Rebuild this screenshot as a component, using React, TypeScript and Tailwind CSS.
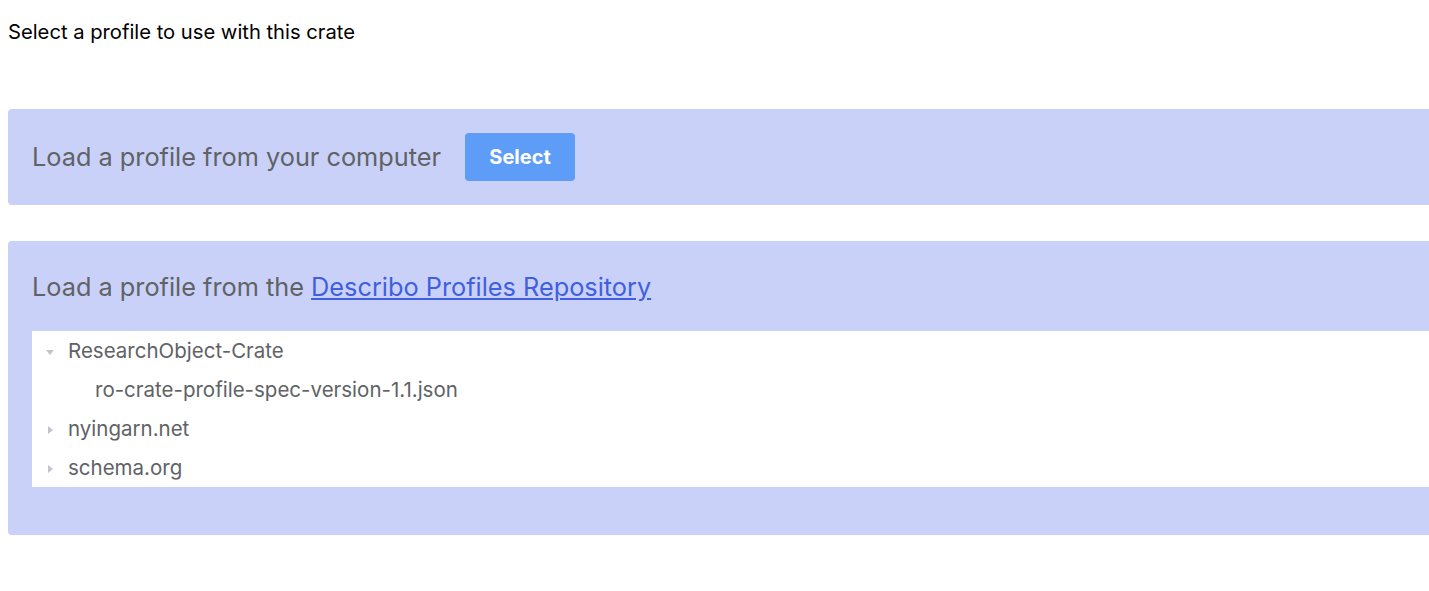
import { useState } from 'react';

type Node = { name: string; children?: Node[] };

const tree: Node[] = [
  { name: 'ResearchObject-Crate', children: [{ name: 'ro-crate-profile-spec-version-1.1.json' }] },
  { name: 'nyingarn.net', children: [] },
  { name: 'schema.org', children: [] },
];

function Caret({ open }: { open: boolean }) {
  return (
    <svg width="10" height="10" viewBox="0 0 10 10" className={open ? '' : '-rotate-90'}>
      <path d="M1 3h8L5 8z" fill="#c0c4cc" />
    </svg>
  );
}

export default function App() {
  const [open, setOpen] = useState<Record<string, boolean>>({ 'ResearchObject-Crate': true });

  return (
    <div className="w-[1429px] h-[591px] overflow-hidden bg-white font-['Inter',sans-serif]">
      <div className="w-[1500px] px-2">
        <h1 className="pt-[21px] text-[20.2px] leading-[22px] text-black">Select a profile to use with this crate</h1>

        <div className="mt-[66px] h-[96px] rounded bg-[#cad1f8] pl-6 flex items-center gap-6">
          <span className="text-[25.3px] text-[#606266]">Load a profile from your computer</span>
          <button className="w-[110px] h-[48px] rounded bg-[#5d9cf7] text-white text-[20px] font-bold">Select</button>
        </div>

        <div className="mt-9 rounded bg-[#cad1f8] pl-6 pt-[30px] pb-[47px]">
          <div className="text-[25.3px] leading-[32px] text-[#606266]">
            Load a profile from the{' '}
            <a href="#" className="text-[#3f5fe0] underline">Describo Profiles Repository</a>
          </div>
          <div className="mt-[28px] bg-white">
            {tree.map((n) => (
              <div key={n.name}>
                <div
                  className="h-[39px] pt-[2px] flex items-center pl-[13px] gap-[13px] text-[20.5px] text-[#606266] cursor-pointer"
                  onClick={() => setOpen({ ...open, [n.name]: !open[n.name] })}
                >
                  <Caret open={!!open[n.name]} />
                  <span>{n.name}</span>
                </div>
                {open[n.name] &&
                  n.children?.map((c) => (
                    <div key={c.name} className="h-[39px] pt-[2px] flex items-center pl-[63px] text-[20.5px] text-[#606266]">
                      {c.name}
                    </div>
                  ))}
              </div>
            ))}
          </div>
          <div className="h-px" />
        </div>
      </div>
    </div>
  );
}
